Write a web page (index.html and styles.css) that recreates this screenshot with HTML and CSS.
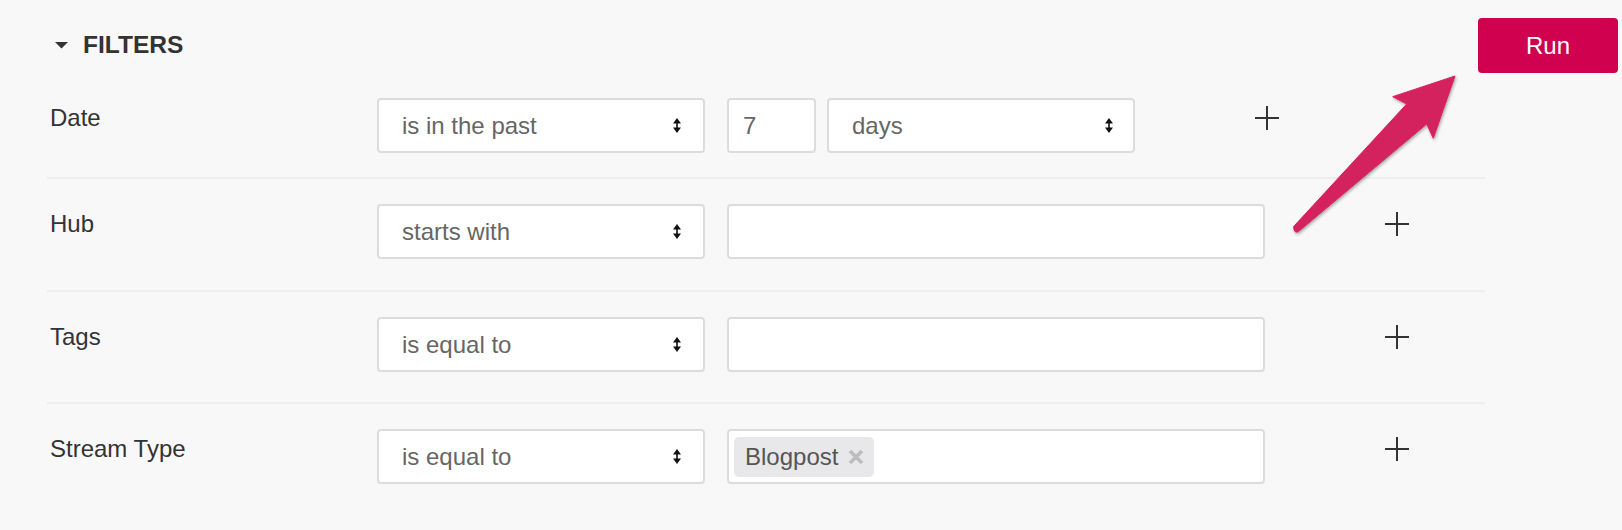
FILE: index.html
```html
<!DOCTYPE html>
<html>
<head>
<meta charset="utf-8">
<link rel="stylesheet" href="styles.css">
</head>
<body>
<div class="page">
  <header class="head">
    <div class="title">
      <svg class="caret" width="13" height="7" viewBox="0 0 13 7"><path d="M0 0 L13 0 L6.5 6.5 Z" fill="#333"/></svg>
      <span>FILTERS</span>
    </div>
    <button class="run">Run</button>
  </header>

  <div class="rows">
    <div class="row row-first">
      <div class="label">Date</div>
      <div class="select sel-op"><span>is in the past</span><svg class="updown" width="8" height="15" viewBox="0 0 8 15"><path d="M0 5.5 L4 0 L8 5.5 Z M3.2 5 H4.8 V10 H3.2 Z M0 9.5 L8 9.5 L4 15 Z" fill="#111"/></svg></div>
      <div class="input input-num">7</div>
      <div class="select sel-unit"><span>days</span><svg class="updown" width="8" height="15" viewBox="0 0 8 15"><path d="M0 5.5 L4 0 L8 5.5 Z M3.2 5 H4.8 V10 H3.2 Z M0 9.5 L8 9.5 L4 15 Z" fill="#111"/></svg></div>
      <svg class="plus" width="24" height="24" viewBox="0 0 24 24"><path d="M0 12 H24 M12 0 V24" stroke="#333" stroke-width="2"/></svg>
    </div>

    <div class="row">
      <div class="label">Hub</div>
      <div class="select sel-op"><span>starts with</span><svg class="updown" width="8" height="15" viewBox="0 0 8 15"><path d="M0 5.5 L4 0 L8 5.5 Z M3.2 5 H4.8 V10 H3.2 Z M0 9.5 L8 9.5 L4 15 Z" fill="#111"/></svg></div>
      <div class="input input-wide"></div>
      <svg class="plus" width="24" height="24" viewBox="0 0 24 24"><path d="M0 12 H24 M12 0 V24" stroke="#333" stroke-width="2"/></svg>
    </div>

    <div class="row row-third">
      <div class="label">Tags</div>
      <div class="select sel-op"><span>is equal to</span><svg class="updown" width="8" height="15" viewBox="0 0 8 15"><path d="M0 5.5 L4 0 L8 5.5 Z M3.2 5 H4.8 V10 H3.2 Z M0 9.5 L8 9.5 L4 15 Z" fill="#111"/></svg></div>
      <div class="input input-wide"></div>
      <svg class="plus" width="24" height="24" viewBox="0 0 24 24"><path d="M0 12 H24 M12 0 V24" stroke="#333" stroke-width="2"/></svg>
    </div>

    <div class="row row-last">
      <div class="label">Stream Type</div>
      <div class="select sel-op"><span>is equal to</span><svg class="updown" width="8" height="15" viewBox="0 0 8 15"><path d="M0 5.5 L4 0 L8 5.5 Z M3.2 5 H4.8 V10 H3.2 Z M0 9.5 L8 9.5 L4 15 Z" fill="#111"/></svg></div>
      <div class="input input-wide input-tags">
        <span class="chip"><span>Blogpost</span><svg class="chip-x" width="16" height="16" viewBox="0 0 16 16"><path d="M2 2 L14 14 M14 2 L2 14" stroke="#bdbdbd" stroke-width="3.6"/></svg></span>
      </div>
      <svg class="plus" width="24" height="24" viewBox="0 0 24 24"><path d="M0 12 H24 M12 0 V24" stroke="#333" stroke-width="2"/></svg>
    </div>
  </div>

  <svg class="annot" width="1622" height="530" viewBox="0 0 1622 530">
    <defs>
      <filter id="sh" x="-20%" y="-20%" width="140%" height="140%">
        <feDropShadow dx="1" dy="1.5" stdDeviation="1.5" flood-color="#000" flood-opacity="0.35"/>
      </filter>
    </defs>
    <path d="M1293.6 226.6 L1406.7 104 L1392.7 96.7 L1455 76 L1433.3 138.3 L1426.7 124 L1298.4 231.6 Q1294 234 1293.6 226.6 Z" fill="#d4225f" stroke="#d4225f" stroke-width="1" stroke-linejoin="round" filter="url(#sh)"/>
  </svg>
</div>
</body>
</html>
```

FILE: styles.css
```css
* {
  box-sizing: border-box;
}

html, body {
  margin: 0;
  padding: 0;
  background: #f8f8f8;
}

body {
  font-family: "Liberation Sans", Arial, Helvetica, sans-serif;
  font-size: 24px;
  color: #333;
  width: 1622px;
  height: 530px;
  overflow: hidden;
}

.page {
  position: relative;
  padding: 18px 4px 0 47px;
  height: 530px;
}

.head {
  display: flex;
  justify-content: space-between;
  align-items: center;
  height: 55px;
}

.title {
  display: flex;
  align-items: center;
  padding-left: 8px;
  margin-top: -2px;
  font-weight: bold;
  font-size: 24.5px;
  color: #333;
  gap: 15px;
}

.caret {
  display: block;
  margin-top: 1px;
}

.run {
  width: 140px;
  height: 55px;
  border: none;
  border-radius: 4px;
  background: #d0024f;
  color: #fff;
  font-family: "Liberation Sans", Arial, Helvetica, sans-serif;
  font-size: 24px;
  padding: 0;
}

.rows {
  width: 1438px;
}

.row {
  display: flex;
  align-items: flex-start;
  padding: 25px 0 31px;
  border-bottom: 2px solid #eeeeee;
}

.row-first {
  padding-bottom: 24px;
}

.row-third {
  padding-bottom: 30px;
}

.row-last {
  border-bottom: none;
}

.label {
  width: 330px;
  flex: none;
  padding-left: 3px;
  margin-top: 6px;
  color: #333;
}

.select {
  flex: none;
  height: 55px;
  background: #fff;
  border: 2px solid #dcdcdc;
  border-radius: 4px;
  display: flex;
  align-items: center;
  justify-content: space-between;
  padding: 0 22px 0 23px;
  color: #666;
}

.updown {
  display: block;
  flex: none;
}

.sel-op {
  width: 328px;
}

.sel-unit {
  width: 308px;
  margin-left: 11px;
  padding-right: 20px;
}

.input {
  flex: none;
  height: 55px;
  background: #fff;
  border: 2px solid #dcdcdc;
  border-radius: 4px;
  margin-left: 22px;
  color: #666;
  display: flex;
  align-items: center;
}

.input-num {
  width: 89px;
  padding-left: 14px;
}

.input-wide {
  width: 538px;
}

.input-tags {
  padding-left: 5px;
}

.chip {
  display: flex;
  align-items: center;
  height: 40px;
  padding: 0 10px 0 11px;
  gap: 10px;
  background: #e8e8ea;
  border-radius: 5px;
  color: #555;
}

.chip-x {
  display: block;
}

.plus {
  display: block;
  flex: none;
  margin-left: 120px;
  margin-top: 8px;
}

.annot {
  position: absolute;
  top: 0;
  left: 0;
  pointer-events: none;
}
```
